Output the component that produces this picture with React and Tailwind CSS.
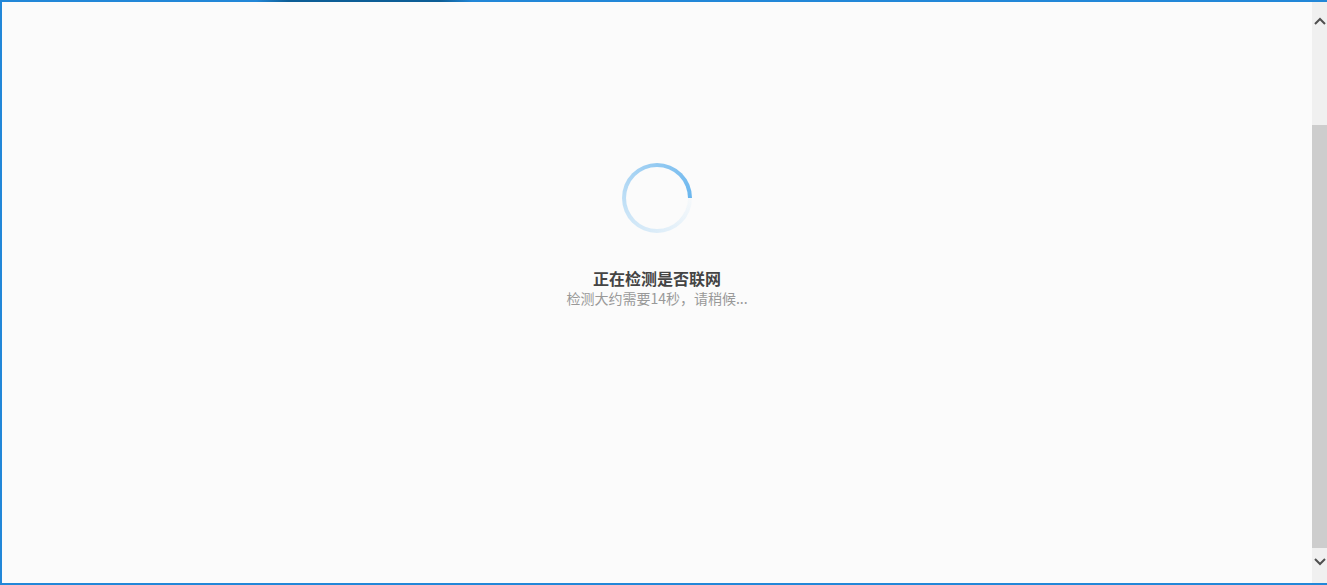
import React from 'react';

const Spinner = () => (
  <div className="relative h-[70px] w-[70px] rounded-full bg-[conic-gradient(from_90deg,rgba(120,190,240,0.04),rgba(120,190,240,0.35)_40%,#6ab6ee)]">
    <div className="absolute inset-[4px] rounded-full bg-[#fbfbfb]"></div>
  </div>
);

const Scrollbar = () => (
  <div className="flex h-full w-[15px] flex-col bg-[#f0f0f0]">
    <div className="flex h-[38px] items-center justify-center text-[#505050]">
      <svg width="12" height="8" viewBox="0 0 12 8">
        <path d="M1 7 L6 2 L11 7" fill="none" stroke="currentColor" strokeWidth="2" />
      </svg>
    </div>
    <div className="mt-[85px] flex-1 bg-[#cdcdcd]"></div>
    <div className="flex h-[35px] justify-center pt-[10px] text-[#505050]">
      <svg width="12" height="8" viewBox="0 0 12 8">
        <path d="M1 1 L6 6 L11 1" fill="none" stroke="currentColor" strokeWidth="2" />
      </svg>
    </div>
  </div>
);

const App = () => {
  return (
    <div className="flex h-[585px] w-[1327px] flex-col overflow-hidden bg-[#fbfbfb] font-['Microsoft_YaHei','Noto_Sans_CJK_SC',sans-serif]">
      {/* top bar */}
      <div className="flex h-[2px] shrink-0 bg-[#2287d8]">
        <div className="ml-[256px] w-[216px] bg-[linear-gradient(90deg,#2287d8,#0d5e96_15%,#0d5e96_85%,#2287d8)]"></div>
      </div>
      <div className="flex min-h-0 flex-1">
        <div className="w-[2px] shrink-0 bg-[#2287d8]"></div>
        <div className="flex flex-1 flex-col items-center pt-[161px]">
          <Spinner />
          <h2 className="mt-[34px] text-[16px] font-bold leading-[22px] text-[#444]">正在检测是否联网</h2>
          <p className="text-[14px] leading-[18px] text-[#999]">检测大约需要14秒，请稍候...</p>
        </div>
        <Scrollbar />
      </div>
      <div className="h-[2px] shrink-0 bg-[#2287d8]"></div>
    </div>
  );
};

export default App;
